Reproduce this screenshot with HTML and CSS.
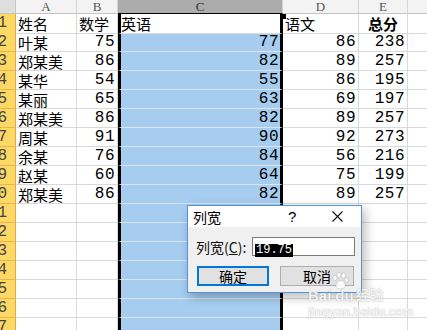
FILE: index.html
```html
<!DOCTYPE html>
<html lang="zh">
<head>
  <meta charset="UTF-8">
  <title>列宽</title>
  <link rel="stylesheet" href="styles.css">
</head>
<body>
  <div class="sheet">
    <div class="row head">
      <div class="corner"></div>
      <div class="ch">A</div>
      <div class="ch">B</div>
      <div class="ch on">C</div>
      <div class="ch">D</div>
      <div class="ch">E</div>
      <div class="ch"></div>
    </div>
    <div class="row">
      <div class="rh"><span>1</span></div>
      <div class="c">姓名</div>
      <div class="c">数学</div>
      <div class="c sel top">英语<span class="handle"></span></div>
      <div class="c">语文</div>
      <div class="c b">总分</div>
      <div class="c"></div>
    </div>
    <div class="row"><div class="rh"><span>2</span></div><div class="c">叶某</div><div class="c num">75</div><div class="c sel num">77</div><div class="c num">86</div><div class="c num">238</div><div class="c"></div></div>
    <div class="row"><div class="rh"><span>3</span></div><div class="c">郑某美</div><div class="c num">86</div><div class="c sel num">82</div><div class="c num">89</div><div class="c num">257</div><div class="c"></div></div>
    <div class="row"><div class="rh"><span>4</span></div><div class="c">某华</div><div class="c num">54</div><div class="c sel num">55</div><div class="c num">86</div><div class="c num">195</div><div class="c"></div></div>
    <div class="row"><div class="rh"><span>5</span></div><div class="c">某丽</div><div class="c num">65</div><div class="c sel num">63</div><div class="c num">69</div><div class="c num">197</div><div class="c"></div></div>
    <div class="row"><div class="rh"><span>6</span></div><div class="c">郑某美</div><div class="c num">86</div><div class="c sel num">82</div><div class="c num">89</div><div class="c num">257</div><div class="c"></div></div>
    <div class="row"><div class="rh"><span>7</span></div><div class="c">周某</div><div class="c num">91</div><div class="c sel num">90</div><div class="c num">92</div><div class="c num">273</div><div class="c"></div></div>
    <div class="row"><div class="rh"><span>8</span></div><div class="c">余某</div><div class="c num">76</div><div class="c sel num">84</div><div class="c num">56</div><div class="c num">216</div><div class="c"></div></div>
    <div class="row"><div class="rh"><span>9</span></div><div class="c">赵某</div><div class="c num">60</div><div class="c sel num">64</div><div class="c num">75</div><div class="c num">199</div><div class="c"></div></div>
    <div class="row"><div class="rh"><span>10</span></div><div class="c">郑某美</div><div class="c num">86</div><div class="c sel num">82</div><div class="c num">89</div><div class="c num">257</div><div class="c"></div></div>
    <div class="row"><div class="rh"><span>11</span></div><div class="c"></div><div class="c"></div><div class="c sel"></div><div class="c"></div><div class="c"></div><div class="c"></div></div>
    <div class="row"><div class="rh"><span>12</span></div><div class="c"></div><div class="c"></div><div class="c sel"></div><div class="c"></div><div class="c"></div><div class="c"></div></div>
    <div class="row"><div class="rh"><span>13</span></div><div class="c"></div><div class="c"></div><div class="c sel"></div><div class="c"></div><div class="c"></div><div class="c"></div></div>
    <div class="row"><div class="rh"><span>14</span></div><div class="c"></div><div class="c"></div><div class="c sel"></div><div class="c"></div><div class="c"></div><div class="c"></div></div>
    <div class="row"><div class="rh"><span>15</span></div><div class="c"></div><div class="c"></div><div class="c sel"></div><div class="c"></div><div class="c"></div><div class="c"></div></div>
    <div class="row"><div class="rh"><span>16</span></div><div class="c"></div><div class="c"></div><div class="c sel"></div><div class="c"></div><div class="c"></div><div class="c"></div></div>
    <div class="row"><div class="rh"><span>17</span></div><div class="c"></div><div class="c"></div><div class="c sel"></div><div class="c"></div><div class="c"></div><div class="c"></div></div>
  </div>

  <!-- column width dialog -->
  <div class="dlg">
    <div class="dlg-title">
      <span class="t">列宽</span>
      <span class="help">?</span>
      <span class="close">
        <svg width="11" height="11" viewBox="0 0 11 11"><path d="M0.5 0.5 L10.5 10.5 M10.5 0.5 L0.5 10.5" stroke="#111" stroke-width="1.1" fill="none"/></svg>
      </span>
    </div>
    <div class="dlg-body">
      <div class="field">
        <label>列宽(<u>C</u>):</label>
        <div class="input"><span class="hl">19.75</span></div>
      </div>
      <div class="btns">
        <div class="btn def">确定</div>
        <div class="btn">取消</div>
      </div>
    </div>
  </div>

  <!-- watermark -->
  <div class="wm">
    <div class="wm-logo">
      <span>Bai</span>
      <svg class="paw" width="18" height="18" viewBox="0 0 18 18">
        <ellipse cx="4" cy="6" rx="2" ry="2.6" />
        <ellipse cx="8" cy="3" rx="2" ry="2.6" />
        <ellipse cx="12.5" cy="3.5" rx="2" ry="2.6" />
        <ellipse cx="15.5" cy="8" rx="1.8" ry="2.3" />
        <path d="M5 15 C5 10 8 8.5 10 8.5 C12.5 8.5 14.5 11 14 14.5 C13.6 17 6 17.5 5 15 Z" />
      </svg>
      <span>du</span>
      <span class="cn">经验</span>
    </div>
    <div class="wm-url">jingyan.baidu.com</div>
  </div>
</body>
</html>
```

FILE: styles.css
```css
* {
  box-sizing: border-box;
}
body {
  margin: 0;
  width: 427px;
  height: 330px;
  overflow: hidden;
  position: relative;
  background: #fff;
  font-family: "Noto Sans CJK SC", sans-serif;
  color: #000;
}

/* sheet grid */
.row {
  display: grid;
  grid-template-columns: 16px 61px 41px 165px 76px 49px 40px;
  height: 19px;
}
.row.head {
  height: 14px;
}
.corner {
  background: #dedede;
  border-right: 1px solid #c4c4c4;
  border-bottom: 1px solid #c4c4c4;
}
.ch {
  background: #f3f3f3;
  border-right: 1px solid #d5d5d5;
  border-bottom: 1px solid #c4c4c4;
  font: 13px "Liberation Serif", serif;
  line-height: 13px;
  color: #555;
  text-align: center;
}
.ch.on {
  background: #acacac;
  color: #333;
  border-bottom-color: #000;
}
.rh {
  display: flex;
  justify-content: flex-end;
  background: #fed864;
  border-right: 1px solid #e0a846;
  border-bottom: 1px solid #e8b650;
  font: 16px "Liberation Mono", monospace;
  line-height: 19px;
  color: #444;
  padding-right: 8px;
  overflow: hidden;
  white-space: nowrap;
}
.rh span {
  flex: none;
}
.c {
  border-right: 1px solid #d9d9d9;
  border-bottom: 1px solid #d9d9d9;
  font-size: 15px;
  line-height: 19px;
  padding: 0 2px;
  white-space: nowrap;
  overflow: hidden;
}
.c.num {
  font-family: "Liberation Mono", monospace;
  font-size: 16px;
  letter-spacing: 0.5px;
  text-align: right;
  padding-right: 2px;
}
.c.b {
  font-weight: 700;
  text-align: center;
}
.c.sel {
  background: #a6cdf0;
  border-left: 3px solid #000;
  border-right: 3px solid #000;
  border-bottom-color: #dde3ea;
  padding-left: 0;
  padding-right: 1px;
}
.c.sel.top {
  background: #fff;
  position: relative;
  overflow: visible;
  border-bottom-color: #d9d9d9;
}
.handle {
  position: absolute;
  right: -6px;
  top: 0;
  width: 5px;
  height: 5px;
  background: #000;
}

/* dialog */
.dlg {
  position: absolute;
  left: 187px;
  top: 205px;
  width: 175px;
  height: 88px;
  border: 1px solid #4f97dc;
  background: #f0f0f0;
  box-shadow: 3px 4px 10px rgba(0, 0, 0, 0.28);
}
.dlg-title {
  height: 21px;
  background: #fff;
  display: flex;
  align-items: center;
  padding-left: 5px;
  font-size: 14px;
}
.dlg-title .t {
  flex: 1;
}
.help {
  width: 12px;
  font: 15px "Liberation Sans", sans-serif;
  margin-right: 32px;
}
.close {
  width: 11px;
  height: 11px;
  margin-right: 18px;
  display: flex;
}
.dlg-body {
  padding: 10px 6px 0 9px;
}
.field {
  display: flex;
  align-items: center;
  height: 19px;
}
.field label {
  width: 56px;
  margin-left: -1px;
  font-size: 14px;
  color: #111;
}
.input {
  width: 103px;
  height: 19px;
  border: 1px solid #7a7a7a;
  background: #fff;
  padding: 2px 2px 0;
  line-height: 13px;
}
.hl {
  display: inline-block;
  background: #000;
  color: #fff;
  font: 12px "Liberation Mono", monospace;
  line-height: 13px;
  padding: 0 1px;
}
.btns {
  display: flex;
  gap: 11px;
  margin-top: 10px;
}
.btn {
  width: 74px;
  height: 20px;
  background: #e1e1e1;
  border: 1px solid #adadad;
  font-size: 14px;
  line-height: 18px;
  text-align: center;
}
.btn.def {
  width: 72px;
  border: 2px solid #0078d7;
  line-height: 16px;
}

/* watermark */
.wm {
  position: absolute;
  left: 308px;
  top: 272px;
  color: rgba(255, 255, 255, 0.9);
  text-shadow: 0 0 1px rgba(0, 0, 0, 0.35);
}
.wm-logo {
  display: flex;
  align-items: flex-end;
  font: 700 15px "Liberation Sans", sans-serif;
  height: 32px;
}
.wm-logo .paw {
  fill: rgba(255, 255, 255, 0.9);
  stroke: rgba(0, 0, 0, 0.18);
  stroke-width: 0.6;
  margin: 0 -14px 14px 0;
}
.wm-logo .cn {
  font: 700 14px "Noto Sans CJK SC", sans-serif;
  margin-left: 2px;
}
.wm-url {
  font: 700 12px "Liberation Sans", sans-serif;
  margin-top: 1px;
}
```
